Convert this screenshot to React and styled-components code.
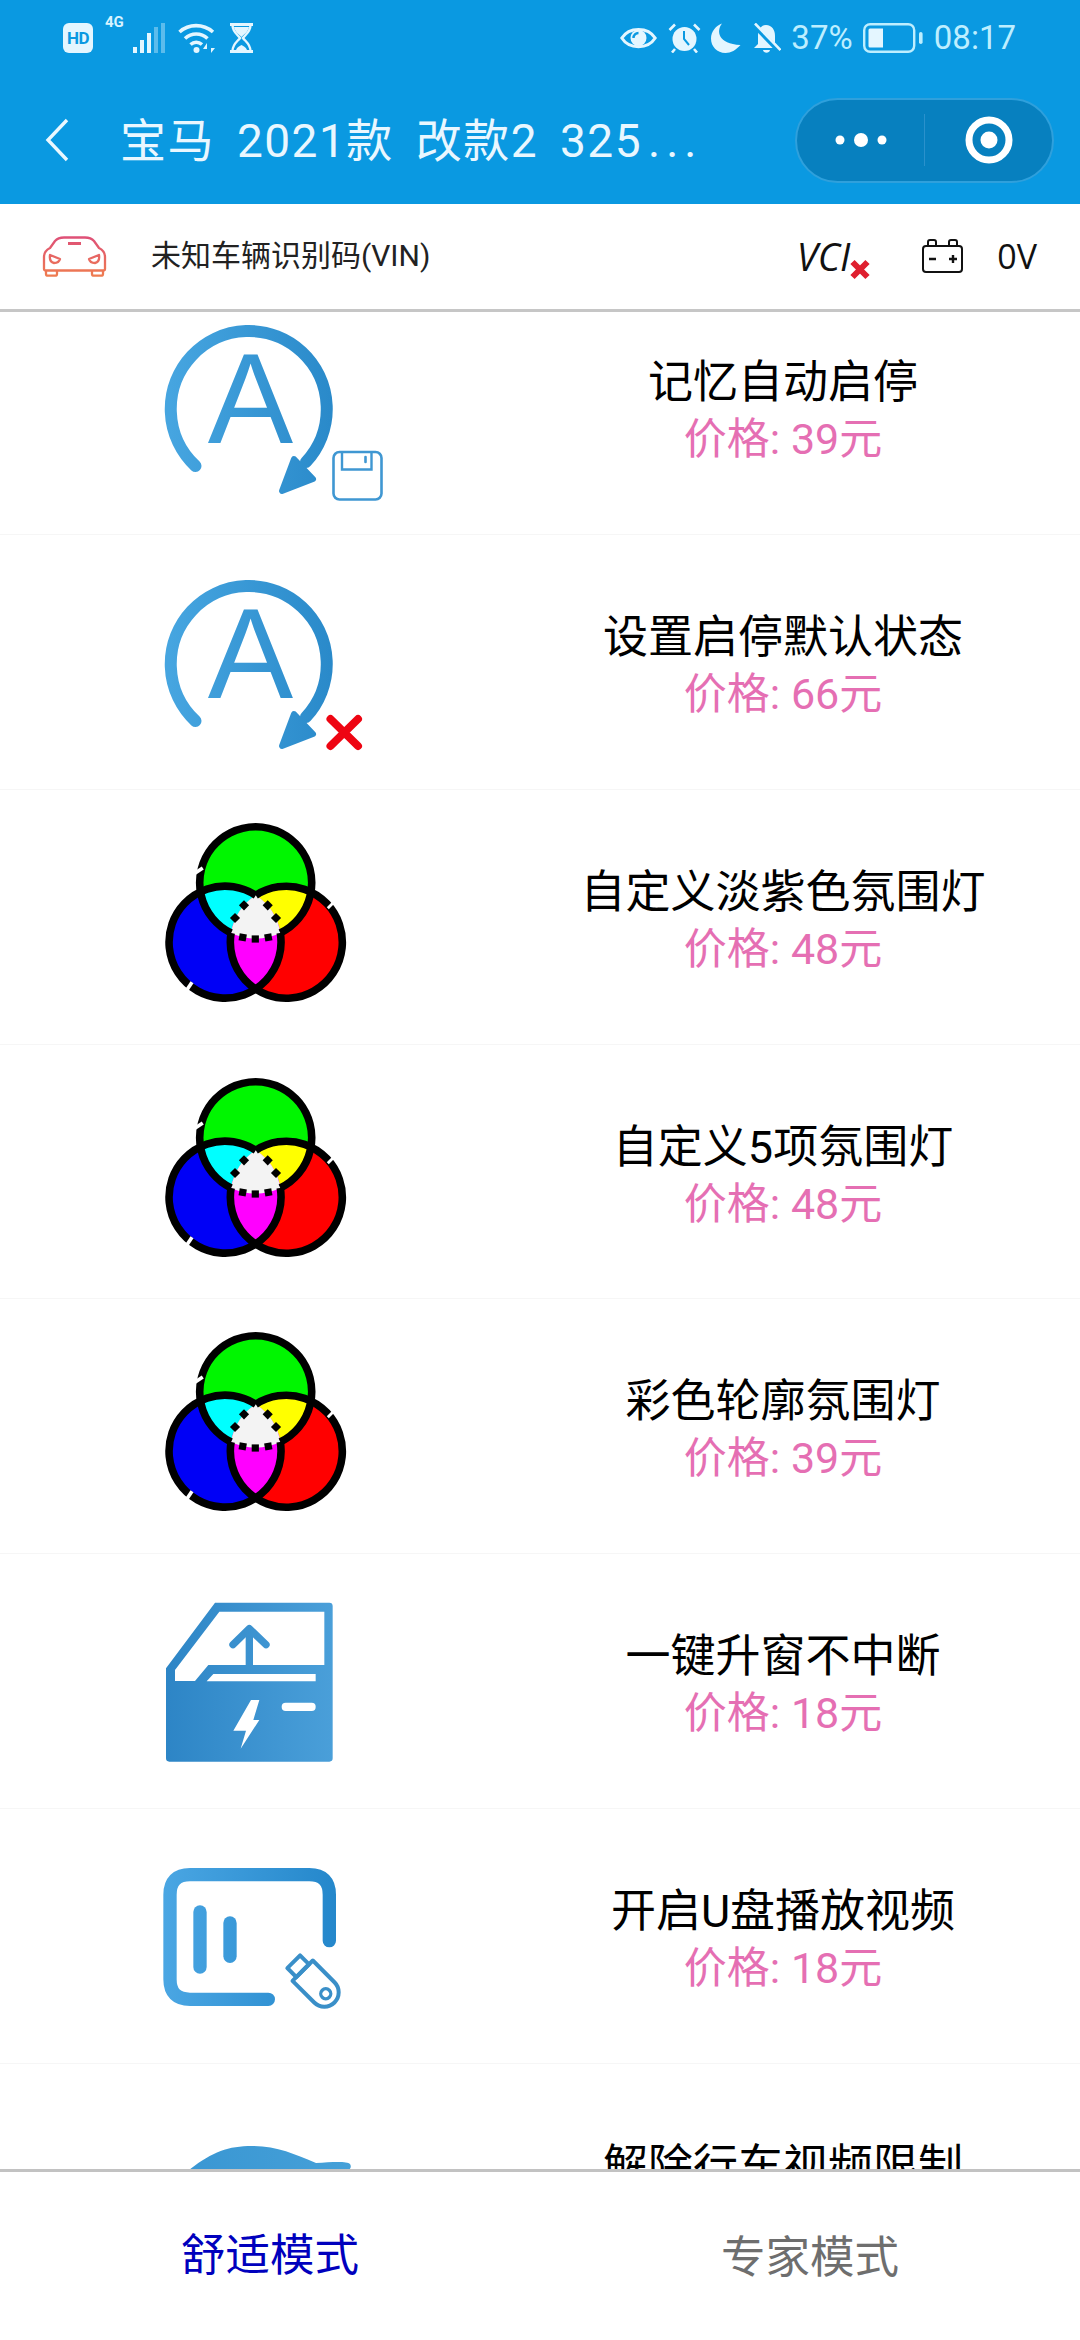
import React from 'react'
import styled, { createGlobalStyle } from 'styled-components'

const CJK = `Roboto, 'Noto Sans CJK SC', sans-serif`

const GlobalStyle = createGlobalStyle`
  html, body {
    margin: 0;
    padding: 0;
    background: #fff;
    font-family: ${CJK};
  }
  * { box-sizing: border-box; }
`

const Page = styled.div`
  width: 1080px;
  height: 2340px;
  display: flex;
  flex-direction: column;
  overflow: hidden;
  background: #fff;
`

const Header = styled.header`
  height: 204px;
  flex: none;
  background: #0a99e1;
`

const StatusBar = styled.div`
  height: 76px;
  padding: 0 64px 0 63px;
  display: flex;
  align-items: center;
  justify-content: space-between;
  color: #d8f3ff;
`

const StatusGroup = styled.div`
  display: flex;
  align-items: center;
  gap: ${props => props.$gap || 10}px;
`

const HdBadge = styled.span`
  width: 30px;
  height: 30px;
  border-radius: 6px;
  background: #e4f6ff;
  color: #0a99e1;
  font: 700 17px/30px 'Roboto', sans-serif;
  text-align: center;
  letter-spacing: -0.5px;
`

const NetLabel = styled.span`
  font: 700 15px/14px 'Roboto', sans-serif;
  align-self: flex-start;
  margin-right: -1px;
  margin-top: -8px;
`

const StatusText = styled.span`
  font: 400 33px/36px 'Roboto', sans-serif;
  color: #bdeeff;
`

const Nav = styled.div`
  height: 128px;
  padding: 0 26px 0 45px;
  display: flex;
  align-items: center;
`

const BackIcon = styled.svg`
  width: 24px;
  height: 44px;
  flex: none;
`

const PageTitle = styled.h1`
  margin: 2px 0 0 51px;
  font: 400 46px/60px ${CJK};
  letter-spacing: 1.5px;
  word-spacing: 9px;
  color: #e9f7ff;
  white-space: nowrap;
`

const TitleDots = styled.span`
  margin-left: 6px;
  letter-spacing: 6px;
`

const Capsule = styled.div`
  margin-left: auto;
  width: 259px;
  height: 85px;
  border-radius: 43px;
  background: #0780bf;
  border: 2px solid #2fa0dc;
  display: flex;
  align-items: center;
`

const CapsuleSide = styled.div`
  flex: 1;
  height: 52px;
  display: flex;
  align-items: center;
  justify-content: center;
  & + & {
    border-left: 1px solid #2a91cc;
  }
`

const InfoBar = styled.div`
  height: 108px;
  flex: none;
  padding: 0 43px 1px 41px;
  border-bottom: 3px solid #c6c6c6;
  display: flex;
  align-items: center;
`

const VinText = styled.span`
  margin-left: 43px;
  font: 400 30px/40px ${CJK};
  color: #222;
`

const Vci = styled.div`
  margin-left: auto;
  display: flex;
  align-items: flex-end;
  font: italic 500 38px/38px 'Open Sans', sans-serif;
  color: #111;
`

const VciCross = styled.svg`
  width: 20px;
  height: 21px;
  margin-bottom: -5px;
`

const BatteryIcon = styled.svg`
  width: 41px;
  height: 34px;
  margin-left: 52px;
`

const Volt = styled.span`
  margin-left: 34px;
  font: 400 34px/40px 'Open Sans', sans-serif;
  color: #111;
`

const List = styled.main`
  flex: 1;
  min-height: 0;
  overflow: hidden;
`

const Rows = styled.div`
  margin-top: -32px;
`

const Row = styled.div`
  height: 254.85px;
  padding: 10px 0 0 140px;
  border-bottom: 1px solid #f6f6f6;
  display: flex;
  align-items: flex-start;
`

const Icon = styled.svg`
  width: 230px;
  height: 230px;
  flex: none;
  overflow: visible;
`

const RowText = styled.div`
  flex: 1;
  margin-left: 116px;
  padding-top: 64px;
  text-align: center;
`

const RowTitle = styled.div`
  font: 400 45px/57px ${CJK};
  color: #000;
`

const Price = styled.div`
  font: 400 43px/57px ${CJK};
  color: #e56fb3;
`

const Tabs = styled.footer`
  height: 171px;
  flex: none;
  border-top: 3px solid #c2c2c2;
  display: flex;
  background: #fff;
`

const Tab = styled.div`
  flex: 1;
  padding-top: ${props => (props.$active ? 56 : 58)}px;
  text-align: center;
  font: 400 44.5px/56px ${CJK};
  color: ${props => (props.$active ? '#0000bd' : '#6e6e6e')};
`

const Grad = ({ id, x1, x2, from, to }) => (
  <linearGradient id={id} gradientUnits="userSpaceOnUse" x1={x1} y1="0" x2={x2} y2="0">
    <stop offset="0" stopColor={from} />
    <stop offset="1" stopColor={to} />
  </linearGradient>
)

const AutoStop = ({ id, children }) => (
  <Icon viewBox="0 0 230 230">
    <defs>
      <Grad id={id} x1="30" x2="190" from="#46a5e0" to="#2a8aca" />
    </defs>
    <path
      d="M55.5 176 A78 78 0 1 1 166 172"
      fill="none"
      stroke={`url(#${id})`}
      strokeWidth="12"
      strokeLinecap="round"
    />
    <path
      d="M154 169 L173 189 L142 201 Z"
      fill={`url(#${id})`}
      stroke={`url(#${id})`}
      strokeWidth="6"
      strokeLinejoin="round"
    />
    <text
      x="110.5"
      y="152.5"
      textAnchor="middle"
      fontFamily="'Liberation Sans', sans-serif"
      fontSize="128"
      fill={`url(#${id})`}
    >
      A
    </text>
    {children}
  </Icon>
)

const Floppy = () => (
  <g fill="none" stroke="#3f97d2">
    <rect x="193.5" y="162" width="48" height="47.5" rx="6" strokeWidth="2.6" />
    <path d="M202 163 V179.5 H231.5 V163" strokeWidth="2.4" />
    <path d="M225.5 167 V172" strokeWidth="2.6" strokeLinecap="round" />
  </g>
)

const RedCross = () => (
  <path
    d="M190.5 174 L218 201 M218 174 L190.5 201"
    stroke="#ee0512"
    strokeWidth="8"
    strokeLinecap="round"
  />
)

const rgbCircles = { g: [115.7, 82.7], b: [85.3, 142.3], r: [146.3, 142.3] }
const dots = [
  [104, 105.3, 45],
  [127.7, 105.3, 45],
  [95, 118, 45],
  [136, 118, 45],
  [102.7, 137.3, 10],
  [115.3, 139, 0],
  [128.3, 137.3, -10]
]

const ColorWheel = ({ id }) => {
  const circle = key => <circle cx={rgbCircles[key][0]} cy={rgbCircles[key][1]} r="56" />
  return (
    <Icon viewBox="0 0 230 230">
      <defs>
        <clipPath id={`${id}g`}>{circle('g')}</clipPath>
        <clipPath id={`${id}b`}>{circle('b')}</clipPath>
        <clipPath id={`${id}r`}>{circle('r')}</clipPath>
      </defs>
      <g fill="#0000f6">{circle('b')}</g>
      <g fill="#ff0000">{circle('r')}</g>
      <g fill="#00f600">{circle('g')}</g>
      <g clipPath={`url(#${id}g)`}>
        <g fill="#00ffff">{circle('b')}</g>
        <g fill="#ffff00">{circle('r')}</g>
      </g>
      <g clipPath={`url(#${id}b)`}>
        <g fill="#ff00ff">{circle('r')}</g>
      </g>
      <path
        d="M115.8 95.3 A56 56 0 0 0 91.1 133 A56 56 0 0 0 140.3 133 A56 56 0 0 0 115.8 95.3 Z"
        fill="#f3f3f3"
      />
      <g fill="none" stroke="#000" strokeWidth="7.6">
        <path d="M140.3 133 A56 56 0 1 0 91.1 133" />
        <path d="M115.8 95.3 A56 56 0 1 0 140.3 133" />
        <path d="M91.1 133 A56 56 0 1 0 115.8 95.3" />
      </g>
      {dots.map(([x, y, a]) => (
        <rect key={`${x}${y}`} x={x - 3.6} y={y - 3.6} width="7.2" height="7.2" transform={`rotate(${a} ${x} ${y})`} />
      ))}
      <path d="M58 69 L60 72" stroke="#fff" strokeWidth="9" />
      <path d="M190 104 L192 106" stroke="#fff" strokeWidth="9" />
      <path d="M48 185 L51 187" stroke="#fff" strokeWidth="9" />
    </Icon>
  )
}

const DoorIcon = ({ id }) => (
  <Icon viewBox="0 -48 690 690">
    <defs>
      <Grad id={id} x1="78" x2="578" from="#2d85c6" to="#4a9fd9" />
    </defs>
    <path
      fillRule="evenodd"
      fill={`url(#${id})`}
      d="M225 68 H568 Q578 68 578 78 V535 Q578 545 568 545 H88 Q78 545 78 535 V265 Z
         M238 95 L105 270 V303 H165 L205 255 H553 V95 Z
         M220 282 L200 304 H527 V282 Z"
    />
    <g fill="none" stroke={`url(#${id})`} strokeLinecap="round" strokeLinejoin="round">
      <path d="M328 150 V260" strokeWidth="22" strokeLinecap="butt" />
      <path d="M279 194 L328 146 L378 194" strokeWidth="22" />
    </g>
    <path d="M333 360 H358 L340 420 H358 L302 506 L318 452 H280 Z" fill="#fff" />
    <rect x="425" y="368" width="102" height="25" rx="12" fill="#fff" />
  </Icon>
)

const UsbVideoIcon = ({ id }) => (
  <Icon viewBox="0 717 690 690">
    <defs>
      <Grad id={id} x1="70" x2="590" from="#4aa6e3" to="#2487cb" />
    </defs>
    <g fill="none" stroke={`url(#${id})`} strokeLinecap="round">
      <path
        d="M385 1258 H150 Q90 1258 90 1198 V944 Q90 884 150 884 H508 Q568 884 568 944 V1082"
        strokeWidth="40"
      />
      <path d="M180 996 V1161" strokeWidth="40" />
      <path d="M270 1029 V1129" strokeWidth="40" />
    </g>
    <g transform="translate(488 1172) rotate(45)" fill="none" stroke="#3a8fc8" strokeWidth="12" strokeLinejoin="round">
      <path d="M0 -43 H92 A43 43 0 0 1 92 43 H0 Z" />
      <rect x="-38" y="-27" width="38" height="54" />
      <circle cx="98" cy="0" r="15" strokeWidth="10" />
    </g>
  </Icon>
)

const TopDownCarIcon = ({ id }) => (
  <Icon viewBox="0 0 230 230">
    <defs>
      <Grad id={id} x1="49" x2="211" from="#3a97d3" to="#45a0d8" />
    </defs>
    <path
      d="M49 96 C72 78 88 72 112 72 C136 72 155 80 176 89 C192 88 207 87 210 90 Q212 93 209 96 L209 160 L49 160 Z"
      fill={`url(#${id})`}
    />
  </Icon>
)

const items = [
  { title: '记忆自动启停', price: 39, icon: <AutoStop id="auto1"><Floppy /></AutoStop> },
  { title: '设置启停默认状态', price: 66, icon: <AutoStop id="auto2"><RedCross /></AutoStop> },
  { title: '自定义淡紫色氛围灯', price: 48, icon: <ColorWheel id="wheel1" /> },
  { title: '自定义5项氛围灯', price: 48, icon: <ColorWheel id="wheel2" /> },
  { title: '彩色轮廓氛围灯', price: 39, icon: <ColorWheel id="wheel3" /> },
  { title: '一键升窗不中断', price: 18, icon: <DoorIcon id="door" /> },
  { title: '开启U盘播放视频', price: 18, icon: <UsbVideoIcon id="usb" /> },
  { title: '解除行车视频限制', icon: <TopDownCarIcon id="car" /> }
]

const statusInk = '#e4f6ff'

const SignalIcon = () => (
  <svg width="33" height="30" viewBox="0 0 33 30">
    <rect x="0" y="24" width="4" height="6" fill={statusInk} />
    <rect x="7" y="17" width="4" height="13" fill={statusInk} />
    <rect x="14" y="10" width="4" height="20" fill={statusInk} />
    <rect x="21" y="4" width="4" height="26" fill="#5cbcec" />
    <rect x="28" y="0" width="4" height="30" fill="#5cbcec" />
  </svg>
)

const WifiIcon = () => (
  <svg width="39" height="31" viewBox="0 0 39 31" fill="none" stroke={statusInk} strokeWidth="3.6">
    <path d="M1.5 9 C11 0.5 25 0.5 35 9" />
    <path d="M7 15.5 C13.5 9.5 23 9.5 29.5 15.5" />
    <path d="M12.5 21.5 C16 18.5 20.5 18.5 24 21.5" />
    <circle cx="18.5" cy="27" r="3" fill={statusInk} stroke="none" />
    <path d="M29 20 L25 26 H29 V30 Z M33 30 L37 25 H33 V21 Z" fill={statusInk} stroke="none" />
  </svg>
)

const HourglassIcon = () => (
  <svg width="25" height="30" viewBox="0 0 25 30" fill="none" stroke={statusInk} strokeWidth="2.4">
    <path d="M1 1.5 H24 M1 28.5 H24" strokeWidth="3" />
    <path d="M3.5 2 C3.5 9 9 12 11 15 C9 18 3.5 21 3.5 28 M21.5 2 C21.5 9 16 12 14 15 C16 18 21.5 21 21.5 28" />
    <path d="M5 4 H20 C19 9 15 11.5 12.5 14 C10 11.5 6 9 5 4 Z M7 27 C8 24 11 23 12.5 22 C14 23 17 24 18 27 Z" fill={statusInk} stroke="none" />
  </svg>
)

const EyeIcon = () => (
  <svg width="37" height="24" viewBox="0 0 37 24" fill="none" stroke={statusInk} strokeWidth="3">
    <path d="M1.8 12 C9 0.5 28 0.5 35.2 12 C28 23.5 9 23.5 1.8 12 Z" />
    <circle cx="18.5" cy="12" r="8" fill={statusInk} stroke="none" />
    <path d="M13.5 12 A5 5 0 0 1 18.5 7" stroke="#0a99e1" strokeWidth="2.4" />
  </svg>
)

const AlarmIcon = () => (
  <svg width="33" height="30" viewBox="0 0 33 30" fill="none" stroke={statusInk}>
    <circle cx="16.5" cy="16" r="12" fill={statusInk} stroke="none" />
    <path d="M1.5 7 L7 1.5 M31.5 7 L26 1.5 M7 26 L4 29.5 M26 26 L29 29.5" strokeWidth="2.6" />
    <path d="M16 8 V16 L21 22" stroke="#0a99e1" strokeWidth="2" />
  </svg>
)

const MoonIcon = () => (
  <svg width="30" height="30" viewBox="0 0 30 30">
    <path d="M11 0.5 C5 8 7 21 29.5 22 C25 27 20 30 14.5 30 C6 30 0 23.5 0 15.5 C0 8.5 5 2.5 11 0.5 Z" fill={statusInk} />
  </svg>
)

const BellOffIcon = () => (
  <svg width="29" height="30" viewBox="0 0 29 30">
    <path d="M14 2 C20 2 23 7 23 13 V20 L27 25 H2 L6 21 V13 C6 7 9 2 14 2 Z" fill={statusInk} />
    <path d="M11 27 H18 C17.5 30.5 11.5 30.5 11 27 Z" fill={statusInk} />
    <path d="M1 1 L28 29" stroke="#0a99e1" strokeWidth="5" />
    <path d="M3 0.5 L28.5 27" stroke={statusInk} strokeWidth="2.6" />
  </svg>
)

const BatteryStatus = () => (
  <svg width="60" height="30" viewBox="0 0 60 30">
    <rect x="1.2" y="1.2" width="50" height="27.6" rx="6" fill="none" stroke="#bdeeff" strokeWidth="2.4" />
    <path d="M7 5.5 H20 V24.5 H7 Q5.5 24.5 5.5 23 V7 Q5.5 5.5 7 5.5 Z" fill={statusInk} />
    <rect x="56" y="9" width="3.6" height="12" rx="1.8" fill="#bdeeff" />
  </svg>
)

const CarIcon = () => (
  <svg width="67" height="41" viewBox="0 0 67 41" fill="none" stroke="url(#carLine)" strokeWidth="2.3" strokeLinejoin="round">
    <defs>
      <linearGradient id="carLine" gradientUnits="userSpaceOnUse" x1="0" y1="0" x2="0" y2="41">
        <stop offset="0" stopColor="#de4f78" />
        <stop offset="1" stopColor="#ef7d4f" />
      </linearGradient>
    </defs>
    <path d="M3 33 V21 Q3 15 9 12 L14 5 Q17 1.5 23 1.5 H44 Q50 1.5 53 5 L58 12 Q64 15 64 21 V33 Q64 34.5 62 34.5 H5 Q3 34.5 3 33 Z" />
    <path d="M27 7.5 H40" strokeWidth="3" />
    <path d="M9 19 L19 23 Q18 27 13 27 Q8 26 9 19 Z M58 19 L48 23 Q49 27 54 27 Q59 26 58 19 Z" />
    <path d="M5 35 V38 Q5 39.7 7 39.7 H14 Q16 39.7 16 38 V35 M51 35 V38 Q51 39.7 53 39.7 H60 Q62 39.7 62 38 V35" />
  </svg>
)

const App = () => (
  <Page>
    <GlobalStyle />
    <Header>
      <StatusBar>
        <StatusGroup $gap={12}>
          <HdBadge>HD</HdBadge>
          <StatusGroup $gap={0}>
            <NetLabel>4G</NetLabel>
            <SignalIcon />
          </StatusGroup>
          <WifiIcon />
          <HourglassIcon />
        </StatusGroup>
        <StatusGroup $gap={10.6}>
          <EyeIcon />
          <AlarmIcon />
          <MoonIcon />
          <BellOffIcon />
          <StatusText>37%</StatusText>
          <BatteryStatus />
          <StatusText>08:17</StatusText>
        </StatusGroup>
      </StatusBar>
      <Nav>
        <BackIcon viewBox="0 0 24 44" fill="none" stroke="#eaf8ff" strokeWidth="3.4">
          <path d="M22 2 L3 22 L22 42" />
        </BackIcon>
        <PageTitle>
          宝马 2021款 改款2 325<TitleDots>...</TitleDots>
        </PageTitle>
        <Capsule>
          <CapsuleSide>
            <svg width="52" height="16" viewBox="0 0 52 16" fill="#fff">
              <circle cx="5" cy="8" r="4.5" />
              <circle cx="26" cy="8" r="7" />
              <circle cx="47" cy="8" r="4.5" />
            </svg>
          </CapsuleSide>
          <CapsuleSide>
            <svg width="48" height="48" viewBox="0 0 48 48">
              <circle cx="24" cy="24" r="20" fill="none" stroke="#fff" strokeWidth="7" />
              <circle cx="24" cy="24" r="8.5" fill="#fff" />
            </svg>
          </CapsuleSide>
        </Capsule>
      </Nav>
    </Header>
    <InfoBar>
      <CarIcon />
      <VinText>未知车辆识别码(VIN)</VinText>
      <Vci>
        VCI
        <VciCross viewBox="0 0 20 21">
          <path d="M2.5 3 L17.5 18 M17.5 3 L2.5 18" stroke="#df1f2f" strokeWidth="6" />
        </VciCross>
      </Vci>
      <BatteryIcon viewBox="0 0 41 34" fill="none" stroke="#111" strokeWidth="2">
        <rect x="1" y="7" width="39" height="26" rx="3" />
        <path d="M6 7 V3 Q6 1 8 1 H12 Q14 1 14 3 V7 M27 7 V3 Q27 1 29 1 H33 Q35 1 35 3 V7" />
        <path d="M7 20 H14 M27 20 H35 M31 16 V24" strokeWidth="2.4" />
      </BatteryIcon>
      <Volt>0V</Volt>
    </InfoBar>
    <List>
      <Rows>
        {items.map(item => (
          <Row key={item.title}>
            {item.icon}
            <RowText>
              <RowTitle>{item.title}</RowTitle>
              {item.price && <Price>价格: {item.price}元</Price>}
            </RowText>
          </Row>
        ))}
      </Rows>
    </List>
    <Tabs>
      <Tab $active>舒适模式</Tab>
      <Tab>专家模式</Tab>
    </Tabs>
  </Page>
)

export default App
